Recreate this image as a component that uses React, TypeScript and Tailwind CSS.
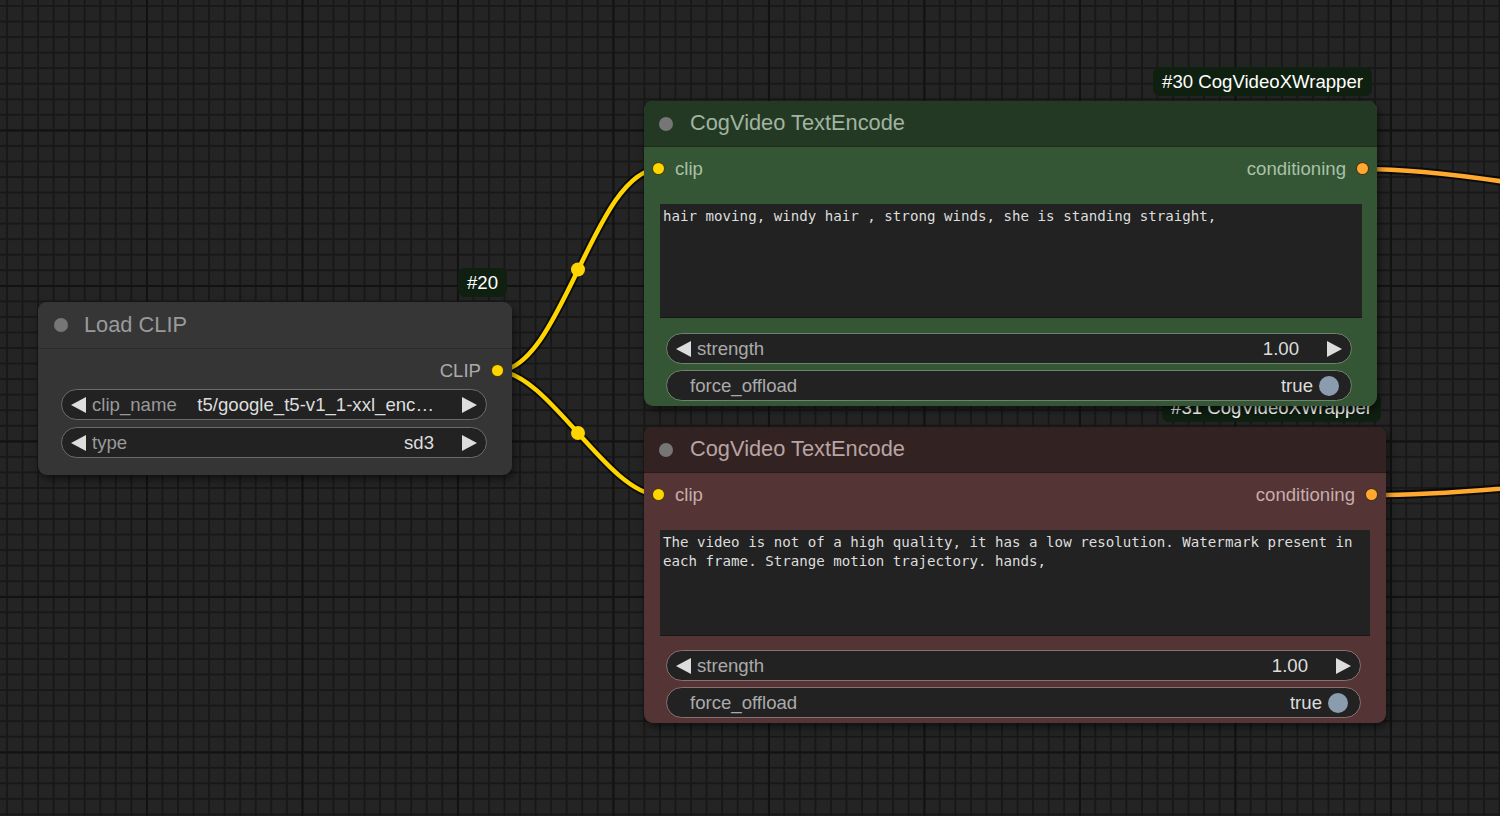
import React from 'react';

type Wire = { d: string; color: string; mid?: [number, number] };

const wires: Wire[] = [
  { d: 'M497 371 C561.7 371 594.3 169 659 169', color: '#ffd500', mid: [578, 269.5] },
  { d: 'M497 371 C548 371 608 495 659 495', color: '#ffd500', mid: [578, 433] },
  { d: 'M1362 169 C1574 169 1988 300 2200 300', color: '#ffa931' },
  { d: 'M1371 495 C1579 495 1992 420 2200 420', color: '#ffa931' },
];

const ArrowLeft = () => (
  <svg width="15" height="16" viewBox="0 0 15 16" className="shrink-0">
    <polygon points="15,0 15,16 0,8" fill="#dddddd" />
  </svg>
);

const ArrowRight = () => (
  <svg width="15" height="16" viewBox="0 0 15 16" className="shrink-0">
    <polygon points="0,0 0,16 15,8" fill="#dddddd" />
  </svg>
);

const Dot = ({ color }: { color: string }) => (
  <span
    className={`block w-[13px] h-[13px] rounded-full border-[1.5px] border-black/70 shrink-0 ${color}`}
  />
);

// combo / number widget with arrows on both sides
const ArrowWidget = ({ label, value, border, labelColor }: { label: string; value: string; border: string; labelColor: string }) => (
  <div className={`h-[31px] flex items-center rounded-full bg-[#222222] border px-[9px] ${border}`}>
    <ArrowLeft />
    <span className={`ml-[6px] flex-1 ${labelColor}`}>{label}</span>
    <span className="text-[#dddddd] whitespace-nowrap">{value}</span>
    <span className="ml-[28px]">
      <ArrowRight />
    </span>
  </div>
);

const ToggleWidget = ({ label, border, labelColor }: { label: string; border: string; labelColor: string }) => (
  <div className={`h-[31px] flex items-center rounded-full bg-[#222222] border pl-[23px] pr-[12px] ${border}`}>
    <span className={`flex-1 ${labelColor}`}>{label}</span>
    <span className="text-[#dddddd]">true</span>
    <span className="ml-[6px] w-[20px] h-[20px] rounded-full bg-[#8c9caf]" />
  </div>
);

const Badge = ({ text }: { text: string }) => (
  <div className="absolute bottom-full right-[5px] mb-[5px] h-[29px] px-[9px] flex items-center rounded-[7px] bg-[#0f1f10] text-white text-[18.6px] whitespace-nowrap">
    {text}
  </div>
);

type TextEncodeProps = {
  pos: string;
  titleBg: string;
  bodyBg: string;
  titleColor: string;
  slotColor: string;
  border: string;
  badge: string;
  prompt: string;
  areaH: string;
  areaMr: string;
  widgetMr: string;
  strengthMt: string;
};

const TextEncodeNode = (p: TextEncodeProps) => (
  <div className={`absolute rounded-[9px] shadow-[2px_4px_8px_rgba(0,0,0,0.55)] ${p.pos} ${p.bodyBg}`}>
    <Badge text={p.badge} />
    <div className={`h-[46px] flex items-center pl-[15px] gap-[17px] rounded-t-[9px] border-b border-black/20 ${p.titleBg}`}>
      <span className="w-[14px] h-[14px] rounded-full bg-[#767676]" />
      <span className={`text-[21.8px] ${p.titleColor}`}>CogVideo TextEncode</span>
    </div>
    <div className="pt-[6px] pb-[5px] flex flex-col">
      <div className={`h-[31px] flex items-center pl-[8px] pr-[8px] text-[18.6px] ${p.slotColor}`}>
        <Dot color="bg-[#ffd500]" />
        <span className="ml-[10px] flex-1">clip</span>
        <span>conditioning</span>
        <span className="ml-[10px]">
          <Dot color="bg-[#ffa931]" />
        </span>
      </div>
      <div
        className={`mt-[20px] ml-[16px] bg-[#222222] border-b border-black/30 pl-[3px] pt-[3px] pr-[4px] font-['DejaVu_Sans_Mono',monospace] text-[14.15px] leading-[19px] text-[#dddddd] whitespace-pre-wrap ${p.areaH} ${p.areaMr}`}
      >
        {p.prompt}
      </div>
      <div className={`ml-[22px] flex flex-col gap-[6px] text-[18.6px] ${p.widgetMr} ${p.strengthMt}`}>
        <ArrowWidget label="strength" value="1.00" border={p.border} labelColor="text-[#aaaaaa]" />
        <ToggleWidget label="force_offload" border={p.border} labelColor="text-[#aaaaaa]" />
      </div>
    </div>
  </div>
);

export default function App() {
  return (
    <div
      className="relative w-[1500px] h-[816px] overflow-hidden bg-[#242424] font-['Liberation_Sans',Arial,sans-serif] bg-[linear-gradient(to_right,#121212_2px,transparent_2px),linear-gradient(to_bottom,#121212_2px,transparent_2px),linear-gradient(to_right,#181818_2px,transparent_2px),linear-gradient(to_bottom,#181818_2px,transparent_2px)] bg-[size:155.5px_155.5px,155.5px_155.5px,15.55px_15.55px,15.55px_15.55px] bg-[position:146px_129.5px,146px_129.5px,6px_5px,6px_5px]"
    >
      {/* links sit under the nodes */}
      <svg className="absolute inset-0" width="1500" height="816" viewBox="0 0 1500 816">
        {wires.map((w, i) => (
          <g key={i}>
            <path d={w.d} fill="none" stroke="#000" strokeOpacity={0.65} strokeWidth={8.5} />
            <path d={w.d} fill="none" stroke={w.color} strokeWidth={4.5} />
            {w.mid && <circle cx={w.mid[0]} cy={w.mid[1]} r={7} fill={w.color} />}
          </g>
        ))}
      </svg>

      {/* Load CLIP */}
      <div className="absolute left-[38px] top-[302px] w-[474px] rounded-[9px] bg-[#353535] shadow-[2px_4px_8px_rgba(0,0,0,0.55)]">
        <Badge text="#20" />
        <div className="h-[47px] flex items-center pl-[16px] gap-[16px] rounded-t-[9px] bg-[#363636] border-b border-[#2a2a2a]">
          <span className="w-[14px] h-[14px] rounded-full bg-[#767676]" />
          <span className="text-[21.8px] text-[#9a9a9a]">Load CLIP</span>
        </div>
        <div className="pt-[6px] pb-[17px] flex flex-col text-[18.6px]">
          <div className="h-[31px] flex items-center justify-end pr-[8px] text-[#aaaaaa]">
            <span>CLIP</span>
            <span className="ml-[10px]">
              <Dot color="bg-[#ffd500]" />
            </span>
          </div>
          <div className="mt-[3px] ml-[23px] mr-[25px] flex flex-col gap-[7px]">
            <ArrowWidget label="clip_name" value="t5/google_t5-v1_1-xxl_enc…" border="border-[#6b6b6b]" labelColor="text-[#999999]" />
            <ArrowWidget label="type" value="sd3" border="border-[#6b6b6b]" labelColor="text-[#999999]" />
          </div>
        </div>
      </div>

      {/* negative prompt, drawn first so the green node covers its badge */}
      <TextEncodeNode
        pos="left-[644px] top-[427px] w-[742px]"
        titleBg="bg-[#332222]"
        bodyBg="bg-[#543434]"
        titleColor="text-[#b9a4a4]"
        slotColor="text-[#c6adad]"
        border="border-[#8a7070]"
        badge="#31 CogVideoXWrapper"
        prompt="The video is not of a high quality, it has a low resolution. Watermark present in each frame. Strange motion trajectory. hands,"
        areaH="h-[106px]"
        areaMr="mr-[16px]"
        widgetMr="mr-[25px]"
        strengthMt="mt-[14px]"
      />

      <TextEncodeNode
        pos="left-[644px] top-[101px] w-[733px]"
        titleBg="bg-[#243924]"
        bodyBg="bg-[#345634]"
        titleColor="text-[#a0b4a0]"
        slotColor="text-[#a9c0a9]"
        border="border-[#6e836e]"
        badge="#30 CogVideoXWrapper"
        prompt="hair moving, windy hair , strong winds, she is standing straight,"
        areaH="h-[114px]"
        areaMr="mr-[15px]"
        widgetMr="mr-[25px]"
        strengthMt="mt-[15px]"
      />
    </div>
  );
}
